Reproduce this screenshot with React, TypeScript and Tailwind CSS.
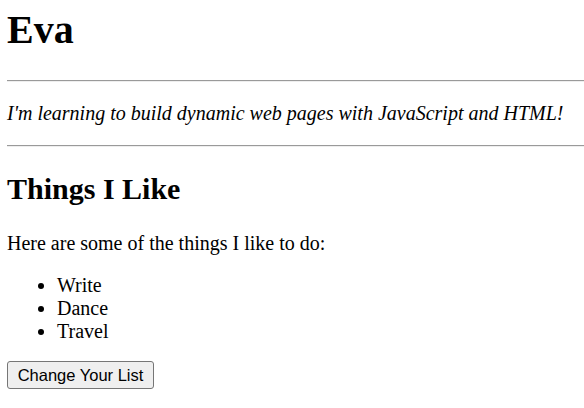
export default function App() {
  const things = ['Write', 'Dance', 'Travel'];

  return (
    <div className="min-h-[408px] bg-white pl-[7px] pt-[7px] font-['Liberation_Serif',serif] text-black">
      <h1 className="text-[40px] leading-[46px] font-bold">Eva</h1>
      <hr className="mt-[27px] h-[2px] border-0 border-t border-b border-t-[#9a9a9a] border-b-[#eeeeee]" />
      <p className="mt-[20px] text-[20px] leading-[23px] italic">
        I'm learning to build dynamic web pages with JavaScript and HTML!
      </p>
      <hr className="mt-[20px] h-[2px] border-0 border-t border-b border-t-[#9a9a9a] border-b-[#eeeeee]" />
      <h2 className="mt-[25px] text-[30px] leading-[34px] font-bold">Things I Like</h2>
      <p className="mt-[26px] text-[20px] leading-[23px]">Here are some of the things I like to do:</p>
      <ul className="mt-[19px] list-disc pl-[50px] text-[20px] leading-[23px]">
        {things.map((t) => (
          <li key={t}>{t}</li>
        ))}
      </ul>
      <button
        type="button"
        className="mt-[18px] flex h-[28px] w-[147px] items-center justify-center rounded-[3px] border border-[#767676] bg-[#efefef] font-['Liberation_Sans',Arial,sans-serif] text-[16.5px] text-black"
      >
        Change Your List
      </button>
    </div>
  );
}
